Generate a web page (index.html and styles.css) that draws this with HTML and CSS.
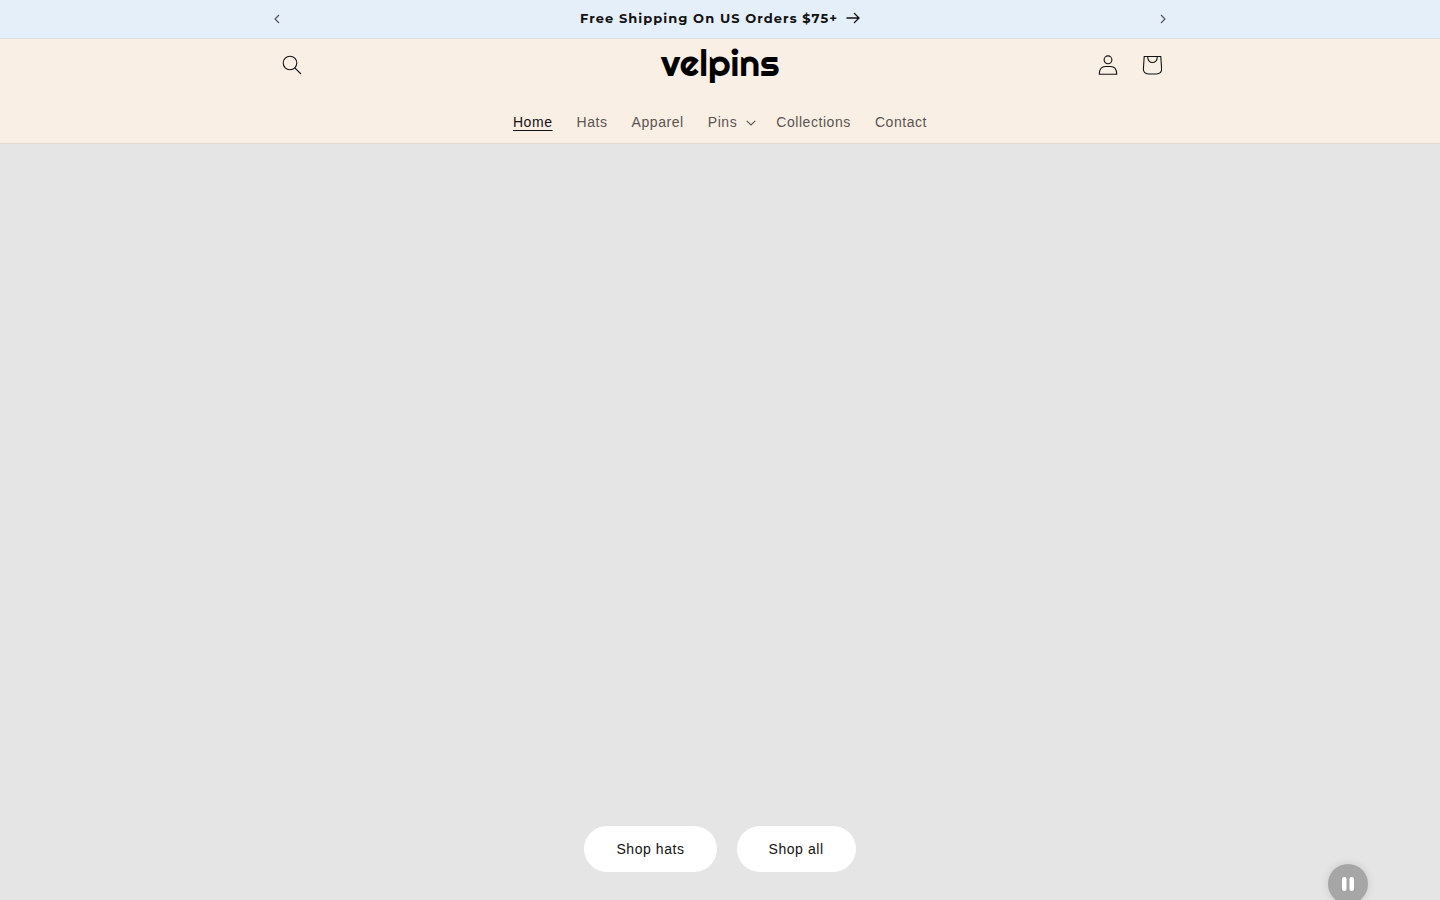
FILE: index.html
```html
<!DOCTYPE html>
<html lang="en">
<head>
<meta charset="utf-8">
<meta name="viewport" content="width=device-width, initial-scale=1">
<title>velpins</title>
<link rel="stylesheet" href="styles.css">
</head>
<body>
<section class="announcement" aria-label="Announcements">
  <div class="announcement-inner">
    <button class="slide-button" type="button" aria-label="Previous announcement">
      <svg width="6" height="10" viewBox="0 0 6 10"><path d="M5 1 1 5l4 4"/></svg>
    </button>
    <a class="announcement-link" href="#">Free Shipping On US Orders $75+
      <svg width="14" height="12" viewBox="0 0 14 12"><path d="M.5 6h12M8 1l5 5-5 5"/></svg>
    </a>
    <button class="slide-button" type="button" aria-label="Next announcement">
      <svg width="6" height="10" viewBox="0 0 6 10"><path d="m1 1 4 4-4 4"/></svg>
    </button>
  </div>
</section>
<header class="header">
  <div class="header-top">
    <button class="icon-button" type="button" aria-label="Search">
      <svg width="20" height="20" viewBox="0 0 20 20"><circle cx="8" cy="8" r="6.800"/><path d="m12.800 12.800 6.200 6.200"/></svg>
    </button>
    <a class="logo" href="#">velpins</a>
    <div class="header-icons">
      <a class="icon-button" href="#" aria-label="Log in">
        <svg width="20" height="20" viewBox="0 0 20 20"><circle cx="10" cy="4.8" r="3.9"/><path d="M1.3 19.3c0-5 2-7.8 6.200-7.800h5c4.200 0 6.200 2.800 6.200 7.800z"/></svg>
      </a>
      <a class="icon-button" href="#" aria-label="Cart">
        <svg width="20" height="20" viewBox="0 0 20 20"><path d="M2.200 1.500h16.600l.8 12.500c.1 3.200-2 5-5 5H6.400c-3 0-5.100-1.800-5-5zM5.800 1.500v1.300a4.700 4.700 0 0 0 9.400 0V1.500"/></svg>
      </a>
    </div>
  </div>
  <nav class="nav" aria-label="Main">
    <a class="nav-link nav-link-active" href="#" aria-current="page">Home</a>
    <a class="nav-link" href="#">Hats</a>
    <a class="nav-link" href="#">Apparel</a>
    <button class="nav-link nav-menu" type="button" aria-expanded="false">Pins
      <svg width="10" height="6" viewBox="0 0 10 6"><path d="m.7.800 4.300 4.200L9.300.800"/></svg>
    </button>
    <a class="nav-link" href="#">Collections</a>
    <a class="nav-link" href="#">Contact</a>
  </nav>
</header>
<main class="hero">
  <a class="hero-button" href="#">Shop hats</a>
  <a class="hero-button" href="#">Shop all</a>
  <button class="pause" type="button" aria-label="Pause">
    <svg width="14" height="14" viewBox="0 0 14 14"><rect x="1" width="4.500" height="14" rx="2.200"/><rect x="8.500" width="4.500" height="14" rx="2.200"/></svg>
  </button>
</main>
</body>
</html>
```
FILE: styles.css
```css
* {
  box-sizing: border-box;
}

body {
  display: flex;
  flex-direction: column;
  min-height: 100vh;
  margin: 0;
  background: #e5e5e5;
  color: #121212;
  font-family: "Liberation Sans", Arial, sans-serif;
  font-size: 14px;
  letter-spacing: 0.04em;
}

a {
  color: inherit;
  text-decoration: none;
}

button {
  padding: 0;
  border: 0;
  background: none;
  color: inherit;
  font: inherit;
  letter-spacing: inherit;
  cursor: pointer;
}

svg {
  display: block;
  fill: none;
  stroke: currentColor;
  stroke-width: 1.1;
}

.announcement {
  border-bottom: 1px solid #dfdfdf;
  background: #e4effa;
}

.announcement-inner {
  display: flex;
  align-items: center;
  justify-content: space-between;
  max-width: 930px;
  height: 38px;
  margin: 0 auto;
}

.slide-button {
  display: grid;
  place-items: center;
  width: 44px;
  height: 38px;
  color: #4c5054;
}

.announcement-link {
  display: flex;
  align-items: center;
  gap: 8px;
  padding-bottom: 2px;
  font-family: Montserrat, "Open Sans", sans-serif;
  font-size: 13px;
  font-weight: 700;
  letter-spacing: 0.08em;
}

.announcement-link svg {
  stroke-width: 1.3;
}

.header {
  border-bottom: 1px solid #e6dbd1;
  background: #faefe5;
}

.header-top {
  display: grid;
  grid-template-columns: 1fr auto 1fr;
  align-items: center;
  max-width: 900px;
  height: 52px;
  margin: 0 auto;
}

.icon-button {
  display: grid;
  place-items: center;
  width: 44px;
  height: 44px;
}

.header-icons {
  display: flex;
  justify-content: flex-end;
  margin-right: -4px;
}

.logo {
  padding-bottom: 4px;
  color: #000;
  font-family: Righteous, Lato, sans-serif;
  font-size: 37px;
  font-weight: 400;
  line-height: 42px;
  letter-spacing: normal;
}

.nav {
  display: flex;
  justify-content: center;
  gap: 24px;
  padding: 22px 0 12px;
  line-height: 18px;
}

.nav-link {
  color: #595450;
}

.nav-link-active {
  color: #121212;
  text-decoration: underline;
  text-underline-offset: 3px;
}

.nav-menu {
  display: flex;
  align-items: center;
  gap: 9px;
  margin-right: -4px;
}

.nav-menu svg {
  margin-top: 2px;
}

.hero {
  position: relative;
  display: flex;
  flex: 1;
  align-items: flex-end;
  justify-content: center;
  gap: 20px;
  padding-bottom: 28px;
  overflow: hidden;
}

.hero-button {
  padding: 0 32px;
  border-radius: 23px;
  background: #fff;
  line-height: 46px;
}

.pause {
  position: absolute;
  right: 72px;
  bottom: -4px;
  display: grid;
  place-items: center;
  width: 40px;
  height: 40px;
  border-radius: 50%;
  background: #a6a6a6;
  box-shadow: 0 0 8px rgba(0, 0, 0, 0.12);
  color: #fff;
}

.pause svg {
  fill: currentColor;
  stroke: none;
}
```
